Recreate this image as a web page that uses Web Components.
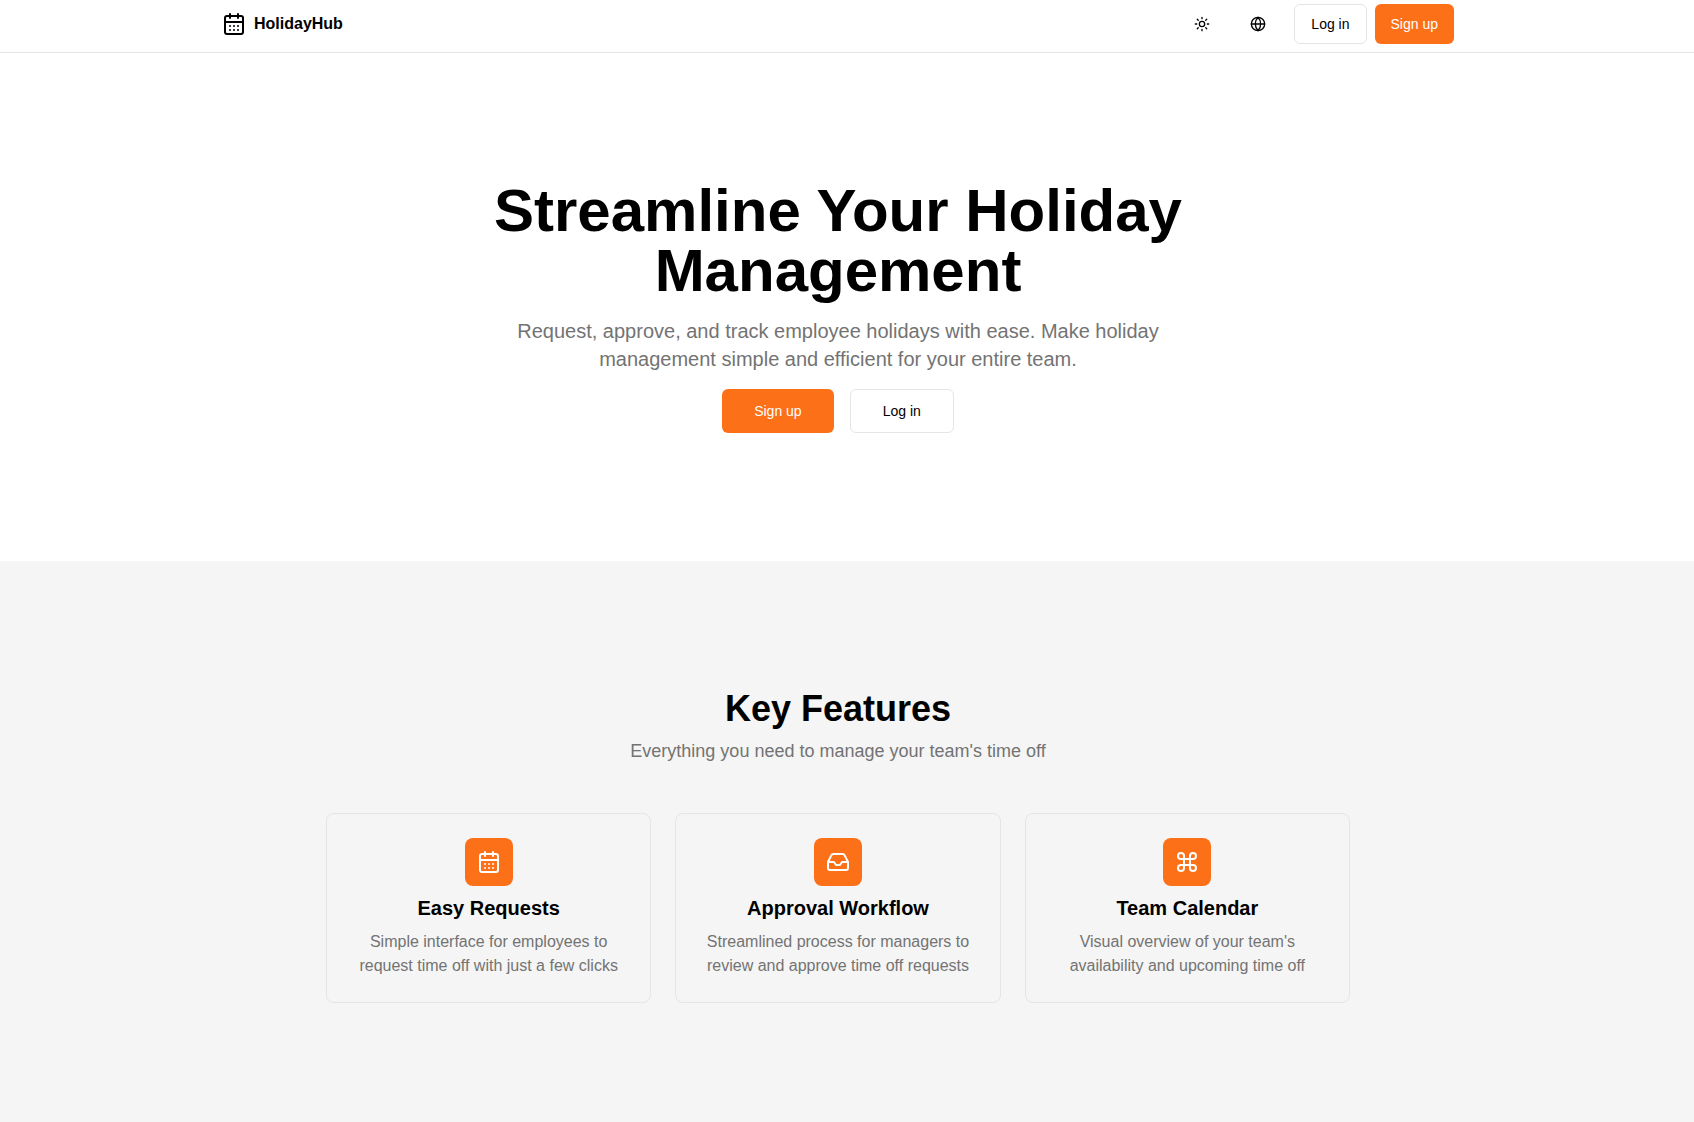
<!DOCTYPE html>
<html lang="en">
<head>
<meta charset="UTF-8">
<meta name="viewport" content="width=device-width, initial-scale=1.0">
<title>HolidayHub</title>
<style>
  :root {
    --primary: #fc7018;
    --foreground: #000;
    --muted: #f5f5f5;
    --muted-foreground: #737373;
    --border: #e5e5e5;
    --gutter: 18px;
  }

  body {
    margin: 0;
    min-height: 100vh;
    display: flex;
    flex-direction: column;
    background: #fff;
    color: var(--foreground);
    font-family: "Liberation Sans", Arial, sans-serif;
  }

  feature-section {
    flex: 1;
  }
</style>
</head>
<body>
  <site-header>HolidayHub</site-header>

  <hero-section>
    <span slot="title">Streamline Your Holiday Management</span>
    <span slot="text">Request, approve, and track employee holidays with ease. Make holiday management simple and efficient for your entire team.</span>
    <hub-button slot="actions" size="lg" href="#signup">Sign up</hub-button>
    <hub-button slot="actions" size="lg" variant="outline" href="#login">Log in</hub-button>
  </hero-section>

  <feature-section>
    <span slot="title">Key Features</span>
    <span slot="text">Everything you need to manage your team's time off</span>
    <feature-card icon="calendar" heading="Easy Requests">Simple interface for employees to request time off with just a few clicks</feature-card>
    <feature-card icon="inbox" heading="Approval Workflow">Streamlined process for managers to review and approve time off requests</feature-card>
    <feature-card icon="command" heading="Team Calendar">Visual overview of your team's availability and upcoming time off</feature-card>
  </feature-section>

<script>
const ICONS = {
  calendar: `
    <path d="M8 2v4M16 2v4M3 10h18"/>
    <rect width="18" height="18" x="3" y="4" rx="2"/>
    <path d="M8 14h.01M12 14h.01M16 14h.01M8 18h.01M12 18h.01M16 18h.01"/>`,
  inbox: `
    <polyline points="22 12 16 12 14 15 10 15 8 12 2 12"/>
    <path d="M5.45 5.11 2 12v6a2 2 0 0 0 2 2h16a2 2 0 0 0 2-2v-6l-3.45-6.89A2 2 0 0 0 16.76 4H7.24a2 2 0 0 0-1.79 1.11z"/>`,
  command: `
    <path d="M15 6v12a3 3 0 1 0 3-3H6a3 3 0 1 0 3 3V6a3 3 0 1 0-3 3h12a3 3 0 1 0-3-3"/>`,
  sun: `
    <circle cx="12" cy="12" r="4"/>
    <path d="M12 2v2M12 20v2M4.93 4.93l1.41 1.41M17.66 17.66l1.41 1.41M2 12h2M20 12h2M6.34 17.66l-1.41 1.41M19.07 4.93l-1.41 1.41"/>`,
  globe: `
    <circle cx="12" cy="12" r="10"/>
    <path d="M12 2a14.5 14.5 0 0 0 0 20 14.5 14.5 0 0 0 0-20M2 12h20"/>`
};

class HubIcon extends HTMLElement {
  constructor() {
    super();
    this.attachShadow({ mode: 'open' });
  }

  connectedCallback() {
    const size = this.getAttribute('size') || '24';

    this.shadowRoot.innerHTML = `
      <style>
        :host {
          display: inline-flex;
          flex-shrink: 0;
        }

        svg {
          display: block;
          fill: none;
          stroke: currentColor;
          stroke-width: 2;
          stroke-linecap: round;
          stroke-linejoin: round;
        }
      </style>
      <svg width="${size}" height="${size}" viewBox="0 0 24 24" aria-hidden="true">${ICONS[this.getAttribute('name')] || ''}</svg>
    `;
  }
}

class HubButton extends HTMLElement {
  constructor() {
    super();
    this.attachShadow({ mode: 'open' });
  }

  connectedCallback() {
    const href = this.getAttribute('href') || '#';

    this.shadowRoot.innerHTML = `
      <style>
        :host {
          display: inline-flex;
        }

        a {
          box-sizing: border-box;
          display: inline-flex;
          align-items: center;
          justify-content: center;
          height: 40px;
          padding: 0 16px;
          border-radius: 6px;
          background: var(--primary);
          color: #fff;
          font-size: 14px;
          line-height: 20px;
          font-weight: 500;
          white-space: nowrap;
          text-decoration: none;
        }

        a:hover {
          opacity: 0.9;
        }

        :host([size="lg"]) a {
          height: 44px;
          padding: 0 32px;
        }

        :host([variant="outline"]) a {
          background: #fff;
          border: 1px solid var(--border);
          color: var(--foreground);
        }
      </style>
      <a href="${href}"><slot></slot></a>
    `;
  }
}

class SiteHeader extends HTMLElement {
  constructor() {
    super();
    this.attachShadow({ mode: 'open' });
  }

  connectedCallback() {
    this.shadowRoot.innerHTML = `
      <style>
        :host {
          display: block;
          padding-right: var(--gutter);
          border-bottom: 1px solid var(--border);
          background: #fff;
        }

        header {
          box-sizing: border-box;
          max-width: 1280px;
          margin: 0 auto;
          padding: 4px 24px 8px;
          display: flex;
          align-items: center;
          justify-content: space-between;
        }

        .brand {
          display: flex;
          align-items: center;
          gap: 8px;
          color: inherit;
          font-size: 16px;
          line-height: 24px;
          font-weight: 700;
          text-decoration: none;
        }

        nav, .auth {
          display: flex;
          align-items: center;
        }

        nav {
          gap: 16px;
        }

        .auth {
          gap: 8px;
        }

        button {
          display: inline-flex;
          align-items: center;
          justify-content: center;
          width: 40px;
          height: 40px;
          padding: 0;
          border: 0;
          border-radius: 6px;
          background: none;
          color: inherit;
          cursor: pointer;
        }

        button:hover {
          background: var(--muted);
        }
      </style>
      <header>
        <a class="brand" href="#"><hub-icon name="calendar"></hub-icon><slot></slot></a>
        <nav>
          <button type="button" aria-label="Toggle theme"><hub-icon name="sun" size="16"></hub-icon></button>
          <button type="button" aria-label="Change language"><hub-icon name="globe" size="16"></hub-icon></button>
          <div class="auth">
            <hub-button variant="outline" href="#login">Log in</hub-button>
            <hub-button href="#signup">Sign up</hub-button>
          </div>
        </nav>
      </header>
    `;
  }
}

class HeroSection extends HTMLElement {
  constructor() {
    super();
    this.attachShadow({ mode: 'open' });
  }

  connectedCallback() {
    this.shadowRoot.innerHTML = `
      <style>
        :host {
          display: block;
          padding: 128px var(--gutter) 128px 0;
        }

        section {
          display: flex;
          flex-direction: column;
          align-items: center;
          gap: 16px;
          text-align: center;
        }

        h1 {
          margin: 0;
          max-width: 768px;
          font-size: 60px;
          line-height: 60px;
          font-weight: 700;
        }

        p {
          margin: 0;
          max-width: 700px;
          color: var(--muted-foreground);
          font-size: 20px;
          line-height: 28px;
        }

        .actions {
          display: flex;
          gap: 16px;
        }
      </style>
      <section>
        <h1><slot name="title"></slot></h1>
        <p><slot name="text"></slot></p>
        <div class="actions"><slot name="actions"></slot></div>
      </section>
    `;
  }
}

class FeatureSection extends HTMLElement {
  constructor() {
    super();
    this.attachShadow({ mode: 'open' });
  }

  connectedCallback() {
    this.shadowRoot.innerHTML = `
      <style>
        :host {
          display: block;
          padding: 128px var(--gutter) 96px 0;
          background: var(--muted);
        }

        section {
          display: flex;
          flex-direction: column;
          align-items: center;
          gap: 48px;
        }

        .intro {
          display: flex;
          flex-direction: column;
          gap: 8px;
          text-align: center;
        }

        h2, p {
          margin: 0;
        }

        h2 {
          font-size: 36px;
          line-height: 40px;
          font-weight: 700;
        }

        p {
          color: var(--muted-foreground);
          font-size: 18px;
          line-height: 28px;
        }

        .grid {
          width: 100%;
          max-width: 1024px;
          display: grid;
          grid-template-columns: repeat(3, 1fr);
          gap: 24px;
        }

        @media (max-width: 768px) {
          .grid {
            grid-template-columns: 1fr;
          }
        }
      </style>
      <section>
        <div class="intro">
          <h2><slot name="title"></slot></h2>
          <p><slot name="text"></slot></p>
        </div>
        <div class="grid"><slot></slot></div>
      </section>
    `;
  }
}

class FeatureCard extends HTMLElement {
  constructor() {
    super();
    this.attachShadow({ mode: 'open' });
  }

  connectedCallback() {
    const icon = this.getAttribute('icon') || '';
    const heading = this.getAttribute('heading') || '';

    this.shadowRoot.innerHTML = `
      <style>
        :host {
          display: flex;
          flex-direction: column;
          align-items: center;
          gap: 8px;
          padding: 24px;
          border: 1px solid var(--border);
          border-radius: 8px;
          text-align: center;
        }

        .icon {
          display: flex;
          align-items: center;
          justify-content: center;
          width: 48px;
          height: 48px;
          border-radius: 8px;
          background: var(--primary);
          color: #fff;
        }

        h3, p {
          margin: 0;
        }

        h3 {
          font-size: 20px;
          line-height: 28px;
          font-weight: 700;
        }

        p {
          color: var(--muted-foreground);
          font-size: 16px;
          line-height: 24px;
        }
      </style>
      <div class="icon"><hub-icon name="${icon}"></hub-icon></div>
      <h3>${heading}</h3>
      <p><slot></slot></p>
    `;
  }
}

customElements.define('hub-icon', HubIcon);
customElements.define('hub-button', HubButton);
customElements.define('site-header', SiteHeader);
customElements.define('hero-section', HeroSection);
customElements.define('feature-section', FeatureSection);
customElements.define('feature-card', FeatureCard);
</script>
</body>
</html>
